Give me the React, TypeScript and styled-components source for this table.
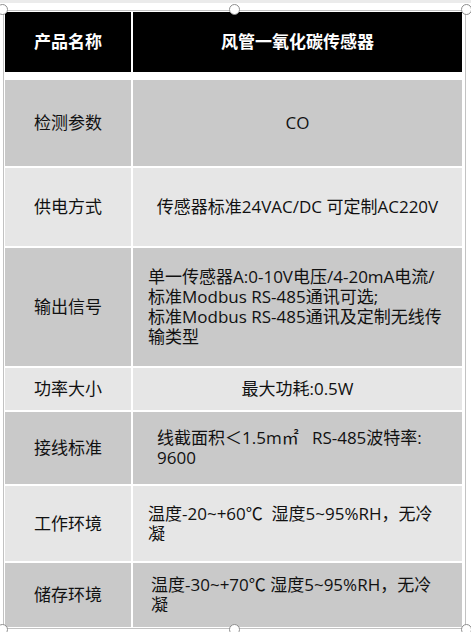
import * as React from 'react';
import styled, { createGlobalStyle } from 'styled-components';

const GlobalStyle = createGlobalStyle`
	html, body {
		margin: 0;
		padding: 0;
		background: #ffffff;
	}
	body {
		font-family: 'Open Sans', 'Noto Sans CJK SC', sans-serif;
		color: #111111;
	}
`;

const SPage = styled.div`
	width: 471px;
	height: 632px;
	overflow: hidden;
	background: #ffffff;
`;

const STopStrip = styled.div`
	height: 3px;
	background: #ebebeb;
`;

const SFrame = styled.div`
	position: relative;
	margin: 7px 0 0 3px;
	width: 459px;
	padding: 1px;
	border: 1px solid #c2c2c2;
	box-sizing: content-box;
`;

interface IHandleProps {
	$v: 'top' | 'bottom';
	$h: 'left' | 'middle' | 'right';
}

const SHandle = styled.span<IHandleProps>`
	position: absolute;
	width: 11px;
	height: 11px;
	box-sizing: border-box;
	border: 1px solid #8e8e8e;
	border-radius: 50%;
	background: #ffffff;
	${(p) => (p.$v === 'top' ? 'top: -7px;' : 'bottom: -7px;')}
	${(p) =>
		p.$h === 'left'
			? 'left: -7px;'
			: p.$h === 'right'
			? 'right: -7px;'
			: 'left: calc(50% - 5.5px);'}
`;

const STable = styled.div`
	display: flex;
	flex-direction: column;
	gap: 2px;
	width: 457px;
`;

interface IRowProps {
	$height: number;
	$header?: boolean;
}

const SRow = styled.div<IRowProps>`
	display: grid;
	grid-template-columns: 126px 329px;
	column-gap: 2px;
	height: ${(p) => p.$height}px;
	margin-bottom: ${(p) => (p.$header ? 6 : 0)}px;
`;

interface ICellProps {
	$tone: 'black' | 'dark' | 'light';
	$indent?: number;
}

const tones = {
	black: '#000000',
	dark: '#c9c9c9',
	light: '#e6e6e6',
};

const SCell = styled.div<ICellProps>`
	display: flex;
	flex-direction: column;
	justify-content: center;
	align-items: ${(p) => (p.$indent === undefined ? 'center' : 'flex-start')};
	padding-left: ${(p) => p.$indent ?? 0}px;
	background: ${(p) => tones[p.$tone]};
	color: ${(p) => (p.$tone === 'black' ? '#ffffff' : '#111111')};
	font-size: 17px;
	line-height: 20px;
	font-weight: ${(p) => (p.$tone === 'black' ? 700 : 400)};
`;

const SLine = styled.span`
	display: block;
	white-space: pre;
`;

interface ISpecRow {
	label: string;
	lines: string[];
	height: number;
	tone: 'dark' | 'light';
	indent?: number;
}

const rows: ISpecRow[] = [
	{ label: '检测参数', lines: ['CO'], height: 86, tone: 'dark' },
	{
		label: '供电方式',
		lines: ['传感器标准24VAC/DC 可定制AC220V'],
		height: 78,
		tone: 'light',
	},
	{
		label: '输出信号',
		lines: [
			'单一传感器A:0-10V电压/4-20mA电流/',
			'标准Modbus RS-485通讯可选;',
			'标准Modbus RS-485通讯及定制无线传',
			'输类型',
		],
		height: 118,
		tone: 'dark',
		indent: 15,
	},
	{ label: '功率大小', lines: ['最大功耗:0.5W'], height: 42, tone: 'light' },
	{
		label: '接线标准',
		lines: ['线截面积＜1.5m㎡   RS-485波特率:', '9600'],
		height: 72,
		tone: 'dark',
		indent: 24,
	},
	{
		label: '工作环境',
		lines: ['温度-20~+60℃  湿度5~95%RH，无冷', '凝'],
		height: 75,
		tone: 'light',
		indent: 15,
	},
	{
		label: '储存环境',
		lines: ['温度-30~+70℃ 湿度5~95%RH，无冷', '凝'],
		height: 64,
		tone: 'dark',
		indent: 18,
	},
];

const App = () => {
	return (
		<SPage>
			<GlobalStyle />
			<STopStrip />
			<SFrame>
				<STable>
					<SRow $height={60} $header>
						<SCell $tone='black'>产品名称</SCell>
						<SCell $tone='black'>风管一氧化碳传感器</SCell>
					</SRow>
					{rows.map((row) => (
						<SRow key={row.label} $height={row.height}>
							<SCell $tone={row.tone}>{row.label}</SCell>
							<SCell $tone={row.tone} $indent={row.indent}>
								{row.lines.map((line) => (
									<SLine key={line}>{line}</SLine>
								))}
							</SCell>
						</SRow>
					))}
				</STable>
				<SHandle $v='top' $h='left' />
				<SHandle $v='top' $h='middle' />
				<SHandle $v='top' $h='right' />
				<SHandle $v='bottom' $h='left' />
				<SHandle $v='bottom' $h='middle' />
				<SHandle $v='bottom' $h='right' />
			</SFrame>
		</SPage>
	);
};

export default App;
